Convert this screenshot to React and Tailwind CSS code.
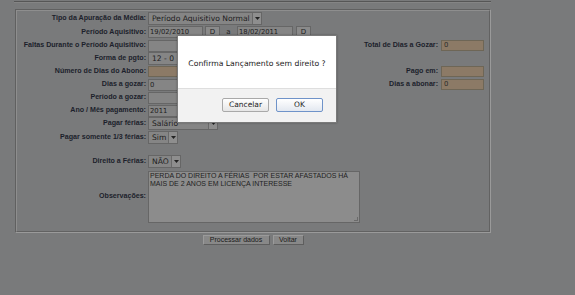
import React from "react";

const lbl = "font-['Liberation_Sans',Arial,sans-serif] font-bold text-[7.1px] text-[#1c1f2b] text-right whitespace-nowrap";
const inp = "h-[12px] border border-[#666] bg-[#858585] font-['DejaVu_Sans',sans-serif] text-[6.8px] text-[#1e1e1e] leading-[10px] pl-[1px] whitespace-nowrap overflow-hidden";
const tan = "h-[11px] border border-[#6e6656] bg-[#8c7a66] font-['DejaVu_Sans',sans-serif] text-[6.8px] text-[#2a2a2a] leading-[9px] pl-[2px]";

function Arrow() {
  return (
    <div className="w-[9px] h-full border-l border-[#6a6a6a] bg-[#8e8e8e] flex items-center justify-center">
      <svg width="5" height="3" viewBox="0 0 5 3"><path d="M0 0 L5 0 L2.5 3 Z" fill="#222" /></svg>
    </div>
  );
}

function Select({ w, text }) {
  return (
    <div className={`${w} h-[13px] border border-[#666] bg-[#858585] flex items-stretch`}>
      <div className="flex-1 pl-[3px] font-['DejaVu_Sans',sans-serif] text-[7.6px] leading-[11px] text-[#1e1e1e] whitespace-nowrap overflow-hidden">{text}</div>
      <Arrow />
    </div>
  );
}

function Row({ h = "h-[13px]", label, children, rlabel, rfield }) {
  return (
    <div className={`flex items-center ${h}`}>
      <div className={`w-[129px] ${lbl}`}>{label}</div>
      <div className="ml-[2px] w-[200px] flex items-center">{children}</div>
      <div className={`w-[90px] ${lbl}`}>{rlabel}</div>
      <div className="ml-[3px] w-[43px]">{rfield}</div>
    </div>
  );
}

function Btn({ w, children }) {
  return (
    <div className={`${w} h-[10px] border border-t-[#9a9a9a] border-l-[#9a9a9a] border-b-[#5e5e5e] border-r-[#5e5e5e] bg-[#888] flex items-center justify-center font-['Liberation_Sans',Arial,sans-serif] text-[7px] text-[#1a1a1a] whitespace-nowrap`}>
      {children}
    </div>
  );
}

export default function App() {
  return (
    <div className="relative w-[575px] h-[295px] overflow-hidden bg-[#797a7b]">
      <div className="ml-[14px] pt-[1px]">
        <div className="w-[477px] h-[1px] bg-[#565656]" />
        <div className="w-[477px] h-[1px] bg-[#858585]" />
      </div>

      <div className="ml-[15px] mt-[6px] w-[476px] border border-t-[#606060] border-l-[#606060] border-b-[#9a9a9a] border-r-[#9a9a9a]">
        <div className="border border-t-[#8e8e8e] border-l-[#8e8e8e] border-b-[#626262] border-r-[#626262] pt-[1px] pb-[7px]">
          <Row label="Tipo da Apuração da Média:">
            <Select w="w-[114px]" text="Período Aquisitivo Normal" />
          </Row>
          <Row h="h-[14px]" label="Período Aquisitivo:">
            <div className={`w-[55px] ${inp}`}>19/02/2010</div>
            <div className="ml-[2px] w-[15px] h-[12px] border border-[#666] bg-[#8a8a8a] flex items-center justify-center font-['DejaVu_Sans',sans-serif] text-[7px] text-[#222]">D</div>
            <div className="w-[17px] text-center font-['DejaVu_Sans',sans-serif] text-[7px] text-[#222]">a</div>
            <div className={`w-[56px] ${inp}`}>18/02/2011</div>
            <div className="ml-[3px] w-[15px] h-[12px] border border-[#666] bg-[#8a8a8a] flex items-center justify-center font-['DejaVu_Sans',sans-serif] text-[7px] text-[#222]">D</div>
          </Row>
          <Row label="Faltas Durante o Período Aquisitivo:" rlabel="Total de Dias a Gozar:" rfield={<div className={tan}>0</div>}>
            <div className={`w-[60px] ${inp}`}></div>
          </Row>
          <Row label="Forma de pgto:">
            <Select w="w-[120px]" text="12 - 0" />
          </Row>
          <Row label="Número de Dias do Abono:" rlabel="Pago em:" rfield={<div className={tan}></div>}>
            <div className={`w-[60px] ${tan}`}></div>
          </Row>
          <Row label="Dias a gozar:" rlabel="Dias a abonar:" rfield={<div className={tan}>0</div>}>
            <div className={`w-[60px] ${inp}`}>0</div>
          </Row>
          <Row label="Período a gozar:">
            <div className={`w-[60px] ${inp}`}></div>
          </Row>
          <Row label="Ano / Mês pagamento:">
            <div className={`w-[60px] ${inp}`}>2011</div>
          </Row>
          <Row label="Pagar férias:">
            <Select w="w-[70px]" text="Salário" />
          </Row>
          <Row h="h-[14px]" label="Pagar somente 1/3 férias:">
            <Select w="w-[30px]" text="Sim" />
          </Row>
          <div className="h-[11px]" />
          <Row label="Direito a Férias:">
            <Select w="w-[33px]" text="NÃO" />
          </Row>
          <div className="flex items-center h-[56px]">
            <div className={`w-[129px] ${lbl}`}>Observações:</div>
            <div className="ml-[2px] relative w-[212px] h-[52px] mt-[2px] border border-[#666] bg-[#8c8c8c] px-[1px] font-['Liberation_Sans',Arial,sans-serif] text-[7px] leading-[8px] text-[#222] whitespace-pre">
              {"PERDA DO DIREITO A FÉRIAS  POR ESTAR AFASTADOS HÁ\nMAIS DE 2 ANOS EM LICENÇA INTERESSE"}
              <div className="absolute right-[1px] bottom-[1px] w-[4px] h-[4px] border-r border-b border-[#6a6a6a]" />
            </div>
          </div>
        </div>
      </div>

      <div className="ml-[15px] w-[476px] mt-[2px] flex justify-center gap-[3px]">
        <Btn w="w-[67px]">Processar dados</Btn>
        <Btn w="w-[31px]">Voltar</Btn>
      </div>

      <div className="absolute left-[177px] top-[35px] w-[160px] h-[88px] bg-white border border-[#7a7a7a] flex flex-col shadow-[0_0_2px_rgba(0,0,0,0.3)]">
        <div className="h-[52px] flex items-center justify-center pt-[3px] font-['DejaVu_Sans',sans-serif] text-[7.7px] text-[#222] whitespace-nowrap">
          Confirma Lançamento sem direito ?
        </div>
        <div className="flex-1 bg-[#f2f2f2] border-t border-[#dedede] flex justify-end items-start gap-[7px] pr-[13px] pt-[9px]">
          <div className="w-[47px] h-[14px] rounded-[2px] border border-[#a9a9a9] bg-gradient-to-b from-white to-[#e6e6e6] flex items-center justify-center font-['DejaVu_Sans',sans-serif] text-[7.5px] text-[#222]">Cancelar</div>
          <div className="w-[47px] h-[14px] rounded-[2px] border border-[#6f93c9] bg-gradient-to-b from-white to-[#e3e8f0] flex items-center justify-center font-['DejaVu_Sans',sans-serif] text-[7.5px] text-[#222]">OK</div>
        </div>
      </div>
    </div>
  );
}
